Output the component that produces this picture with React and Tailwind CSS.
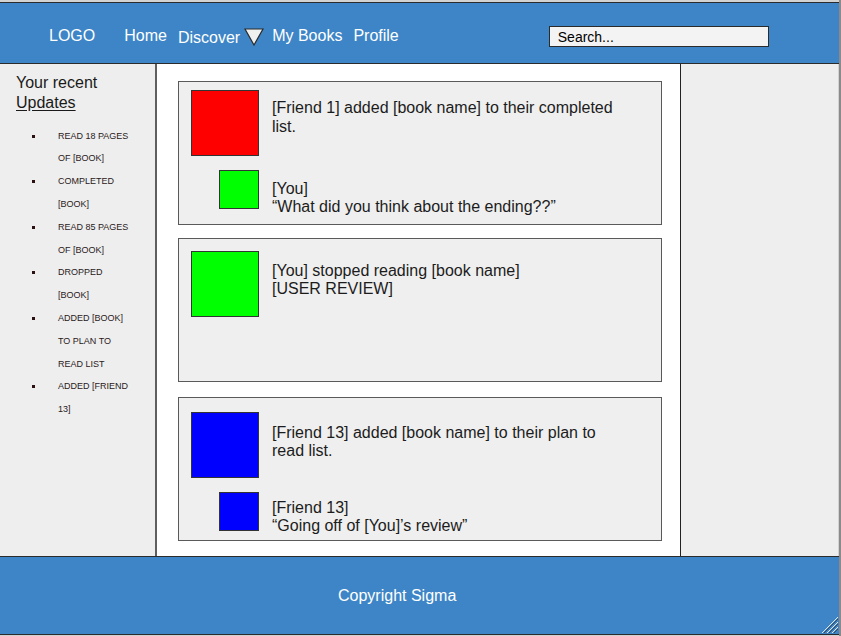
import React from 'react';

const updates = [
  'READ 18 PAGES OF [BOOK]',
  'COMPLETED [BOOK]',
  'READ 85 PAGES OF [BOOK]',
  'DROPPED [BOOK]',
  'ADDED [BOOK] TO PLAN TO READ LIST',
  'ADDED [FRIEND 13]',
];

const Square = ({ color, size }) => (
  <div className={`shrink-0 border border-[#333] ${color} ${size}`}></div>
);

const App = () => {
  return (
    <div className="w-[841px] h-[636px] flex flex-col bg-[#d2d2d2] pt-[2px] pb-[1px] border-r-2 border-[#8a8a8a] font-['Liberation_Sans',Arial,sans-serif] overflow-hidden">
      {/* header */}
      <header className="h-[62px] shrink-0 flex items-center pt-[5px] bg-[#3d85c6] border-y border-[#2b2b2b] text-white text-[16px] leading-[18px]">
        <span className="ml-[49px]">LOGO</span>
        <span className="ml-[29px]">Home</span>
        <span className="ml-[11px] mt-[4px]">Discover</span>
        <svg className="ml-[4px] mt-[2px]" width="20" height="18" viewBox="0 0 20 18">
          <polygon points="1,1 19,1 10,17" fill="#f0f0f0" stroke="#2b2b2b" strokeWidth="1.2" />
        </svg>
        <span className="ml-[8px]">My Books</span>
        <span className="ml-[11px]">Profile</span>
        <div className="ml-[150px] mt-[2px] w-[220px] h-[21px] bg-[#f3f3f3] border border-[#2b2b2b] flex items-center pl-[8px] text-[14px] text-black">
          Search...
        </div>
      </header>

      {/* body */}
      <div className="h-[492px] shrink-0 flex">
        <aside className="w-[157px] shrink-0 bg-[#eeeeee] border-r-2 border-[#5f5f5f] pt-[9px] pl-[16px] text-[#1a1a1a]">
          <p className="text-[16px] leading-[19.6px]">Your recent</p>
          <p className="text-[16px] leading-[19.6px] underline underline-offset-2">Updates</p>
          <ul className="mt-[12.5px] text-[9px] leading-[22.8px] text-[#2a2020]">
            {updates.map((u) => (
              <li key={u} className="flex">
                <span className="mt-[10px] ml-[16px] w-[3px] h-[3px] bg-[#2a1010] shrink-0"></span>
                <span className="ml-[23px] w-[75px]">{u}</span>
              </li>
            ))}
          </ul>
        </aside>

        <main className="w-[524px] shrink-0 bg-white border-r border-[#222] pt-[17px] pl-[21px] flex flex-col text-[16px] leading-[18.8px] text-[#1c1c1c]">
          <div className="w-[484px] h-[144px] border border-[#5a5a5a] bg-[#efefef] pt-[8px] pl-[12px]">
            <div className="flex">
              <Square color="bg-[#ff0000]" size="w-[68px] h-[66px]" />
              <p className="ml-[13px] mt-[9px] w-[360px]">[Friend 1] added [book name] to their completed list.</p>
            </div>
            <div className="flex mt-[14px] ml-[28px]">
              <Square color="bg-[#00ff00]" size="w-[40px] h-[39px]" />
              <p className="ml-[13px] mt-[9.5px]">
                [You]
                <br />
                “What did you think about the ending??”
              </p>
            </div>
          </div>

          <div className="mt-[13px] w-[484px] h-[144px] border border-[#5a5a5a] bg-[#efefef] pt-[12px] pl-[12px]">
            <div className="flex">
              <Square color="bg-[#00ff00]" size="w-[68px] h-[66px]" />
              <p className="ml-[13px] mt-[10.5px] w-[360px]">
                [You] stopped reading [book name]
                <br />
                [USER REVIEW]
              </p>
            </div>
          </div>

          <div className="mt-[15px] w-[484px] h-[144px] border border-[#5a5a5a] bg-[#efefef] pt-[14px] pl-[12px]">
            <div className="flex">
              <Square color="bg-[#0000ff]" size="w-[68px] h-[66px]" />
              <p className="ml-[13px] mt-[11.5px] w-[360px]">[Friend 13] added [book name] to their plan to read list.</p>
            </div>
            <div className="flex mt-[14px] ml-[28px]">
              <Square color="bg-[#0000ff]" size="w-[40px] h-[39px]" />
              <p className="ml-[13px] mt-[6.5px]">
                [Friend 13]
                <br />
                “Going off of [You]’s review”
              </p>
            </div>
          </div>
        </main>

        <aside className="w-[157px] shrink-0 bg-[#eeeeee]"></aside>
      </div>

      {/* footer */}
      <footer className="relative h-[79px] shrink-0 bg-[#3d85c6] border-y border-[#2b2b2b] flex items-center pl-[338px] text-white text-[16px]">
        Copyright Sigma
        <svg className="absolute right-0 bottom-0" width="18" height="18" viewBox="0 0 18 18">
          <g stroke="#dfe6ee" strokeWidth="1">
            <line x1="17" y1="1" x2="1" y2="17" />
            <line x1="17" y1="6" x2="6" y2="17" />
            <line x1="17" y1="11" x2="11" y2="17" />
          </g>
          <g stroke="#3b4a5a" strokeWidth="1">
            <line x1="17" y1="3" x2="3" y2="17" />
            <line x1="17" y1="8" x2="8" y2="17" />
            <line x1="17" y1="13" x2="13" y2="17" />
          </g>
        </svg>
      </footer>
    </div>
  );
};

export default App;
